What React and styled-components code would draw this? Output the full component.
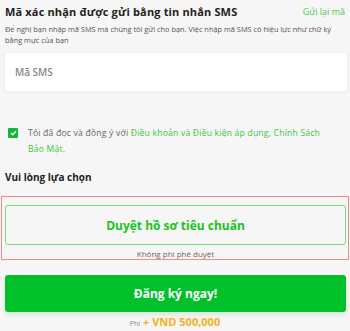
import React from "react";
import styled, { createGlobalStyle } from "styled-components";

const Global = createGlobalStyle`
  html, body { margin: 0; padding: 0; background: #f6f6f6; }
  body { font-family: "Open Sans", "Liberation Sans", sans-serif; }
  * { box-sizing: border-box; }
`;

const Page = styled.div`
  width: 350px;
  height: 331px;
  overflow: hidden;
  background: #f6f6f6;
  display: flex;
  flex-direction: column;
`;

const Section = styled.div`
  padding: 0 4px 0 5px;
`;

const HeaderRow = styled.div`
  display: flex;
  justify-content: space-between;
  align-items: center;
  height: 22px;
  padding-top: 1px;
`;

const Title = styled.div`
  font-size: 11px;
  font-weight: 700;
  color: #222;
  letter-spacing: 0.15px;
`;

const Resend = styled.a`
  font-size: 9px;
  color: #4cc94c;
  margin-right: 1px;
`;

const Desc = styled.p`
  margin: 2px 0 0;
  font-size: 7.4px;
  line-height: 11px;
  color: #555;
  padding-right: 10px;
`;

const Input = styled.input`
  display: block;
  margin-top: 7px;
  width: 342px;
  height: 38px;
  border: none;
  border-radius: 4px;
  background: #fff;
  box-shadow: 0 1px 4px rgba(0, 0, 0, 0.06);
  padding: 0 10px;
  font-family: inherit;
  font-size: 10px;
  font-weight: 600;
  outline: none;
  &::placeholder { color: #888; }
`;

const AgreeRow = styled.div`
  display: flex;
  align-items: flex-start;
  gap: 10px;
  margin-top: 34px;
  padding-left: 3px;
`;

const Check = styled.span`
  flex: none;
  width: 10px;
  height: 10px;
  margin-top: 3px;
  border-radius: 1px;
  background: #12b83a;
  display: flex;
  align-items: center;
  justify-content: center;
`;

const AgreeText = styled.div`
  font-size: 8.6px;
  letter-spacing: 0.2px;
  line-height: 16px;
  color: #666;
  padding-right: 20px;
`;

const Link = styled.span`
  color: #3ec43e;
`;

const SubTitle = styled.div`
  margin-top: 13px;
  font-size: 10px;
  font-weight: 700;
  color: #222;
`;

const Highlight = styled.div`
  margin: 12px 1px 0 1px;
  border: 1px solid #f08a8a;
  height: 64px;
  padding: 8px 2px 0 3px;
  display: flex;
  flex-direction: column;
  align-items: stretch;
`;

const Option = styled.div`
  height: 40px;
  border: 1px solid #7ed87e;
  border-radius: 3px;
  display: flex;
  align-items: center;
  justify-content: center;
  font-size: 12px;
  font-weight: 700;
  color: #1cc21c;
`;

const Note = styled.div`
  text-align: center;
  font-size: 8px;
  color: #666;
  margin-top: 3px;
`;

const Primary = styled.button`
  display: flex;
  align-items: center;
  justify-content: center;
  margin: 15px 4px 0 5px;
  height: 39px;
  border: none;
  border-radius: 3px;
  background: #00c12a;
  box-shadow: 0 3px 5px rgba(0, 150, 40, 0.12);
  color: #fff;
  font-family: inherit;
  font-size: 12px;
  font-weight: 700;
`;

const Fee = styled.div`
  margin-top: 3px;
  text-align: center;
  color: #888;
  font-size: 7px;
  line-height: 14px;
`;

const Price = styled.span`
  color: #f2b11e;
  font-size: 11px;
  font-weight: 700;
  margin-left: 3px;
`;

export default function App() {
  return (
    <Page>
      <Global />
      <Section>
        <HeaderRow>
          <Title>Mã xác nhận được gửi bằng tin nhắn SMS</Title>
          <Resend>Gửi lại mã</Resend>
        </HeaderRow>
        <Desc>
          Để nghị bạn nhập mã SMS mà chúng tôi gửi cho bạn. Việc nhập mã SMS có hiệu lực như chữ ký bằng mực của bạn
        </Desc>
        <Input placeholder="Mã SMS" />
        <AgreeRow>
          <Check>
            <svg width="7" height="6" viewBox="0 0 7 6">
              <path d="M1 3 L2.8 4.7 L6 1.2" stroke="#fff" strokeWidth="1.4" fill="none" />
            </svg>
          </Check>
          <AgreeText>
            Tôi đã đọc và đồng ý với <Link>Điều khoản và Điều kiện áp dụng, Chính Sách Bảo Mật.</Link>
          </AgreeText>
        </AgreeRow>
        <SubTitle>Vui lòng lựa chọn</SubTitle>
      </Section>
      <Highlight>
        <Option>Duyệt hồ sơ tiêu chuẩn</Option>
        <Note>Không phí phê duyệt</Note>
      </Highlight>
      <Primary>Đăng ký ngay!</Primary>
      <Fee>
        Phí<Price>+ VND 500,000</Price>
      </Fee>
    </Page>
  );
}
